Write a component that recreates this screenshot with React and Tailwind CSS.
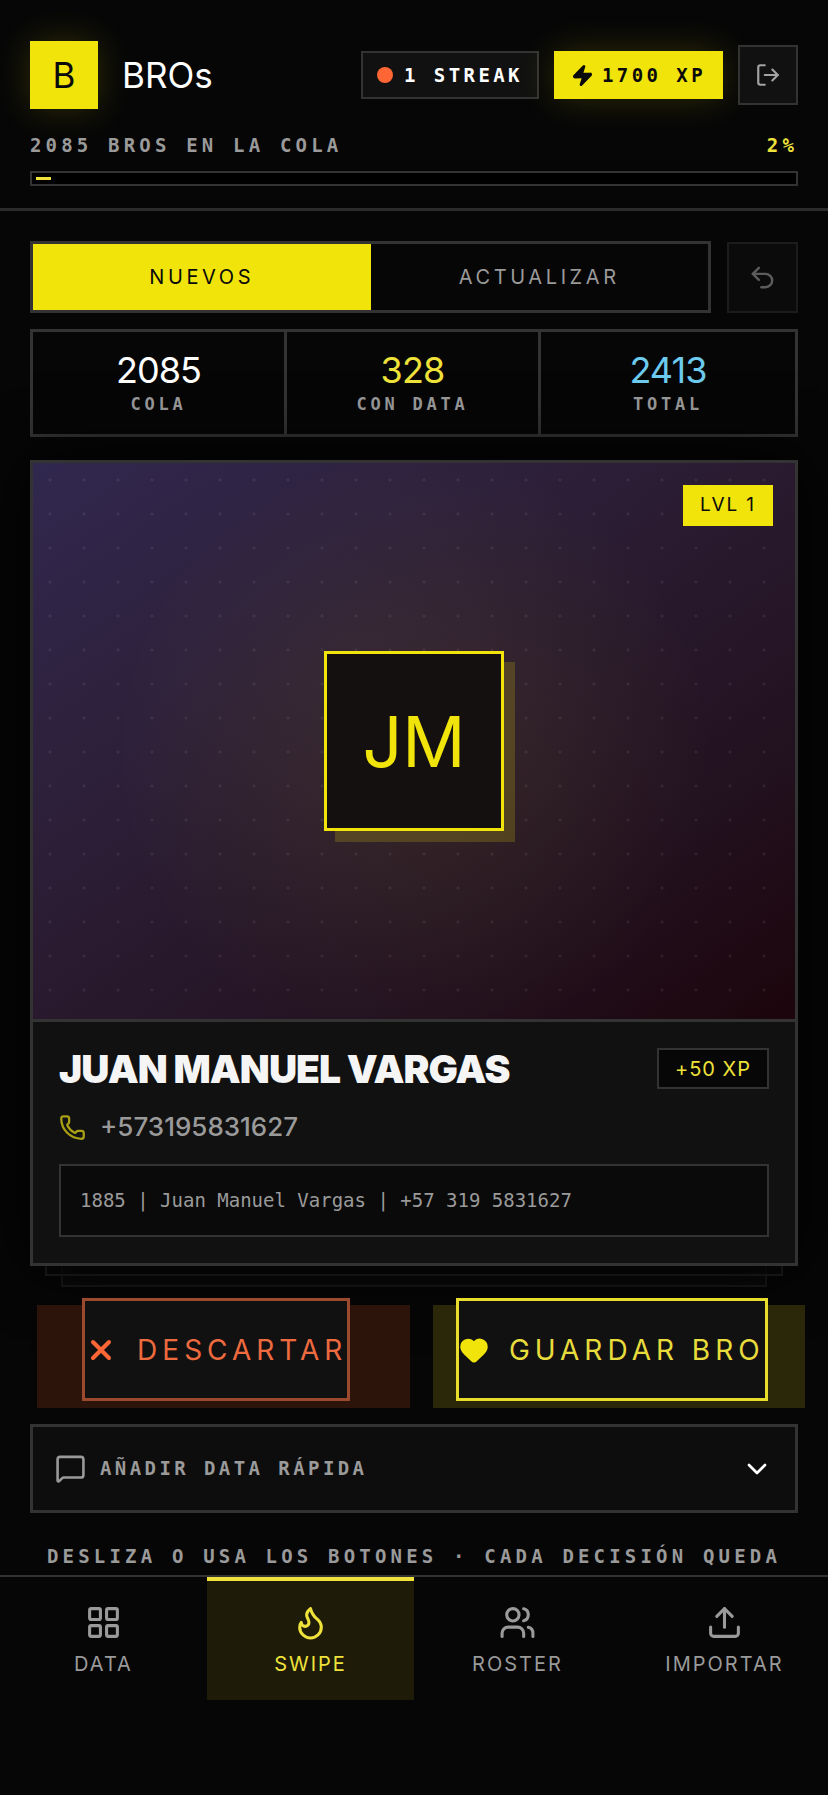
import React, { useState } from "react";
import {
  ChevronDown,
  Flame,
  Heart,
  LayoutGrid,
  LogOut,
  MessageSquare,
  Phone,
  Undo2,
  Upload,
  Users,
  X,
  Zap,
} from "lucide-react";

const stats = [
  { label: "COLA", value: 2085, color: "text-white" },
  { label: "CON DATA", value: 328, color: "text-[#efe23a]" },
  { label: "TOTAL", value: 2413, color: "text-[#6ccbee]" },
];

const navItems = [
  { label: "DATA", icon: LayoutGrid },
  { label: "SWIPE", icon: Flame },
  { label: "ROSTER", icon: Users },
  { label: "IMPORTAR", icon: Upload },
];

const tabs = ["NUEVOS", "ACTUALIZAR"];

const mono = "font-['DejaVu_Sans_Mono',monospace] font-bold";

function Header({ progress }) {
  return (
    <header className="px-[30px] pt-[41px] pb-[22px] border-b-[3px] border-[#2b2b2b]">
      <div className="flex items-center justify-between">
        <div className="flex items-center gap-6">
          <div className="w-[68px] h-[68px] flex items-center justify-center bg-[#f1e40b] text-[#0a0a0a] text-[35px] shadow-[0_0_36px_rgba(242,229,11,0.18)]">
            B
          </div>
          <h1 className="text-[35px] text-white">BROs</h1>
        </div>

        <div className="flex items-center gap-[15px]">
          <div className={`h-12 flex items-center gap-[11px] px-[14px] border-2 border-[#333] bg-[#111] text-white text-[19px] tracking-[0.18em] ${mono}`}>
            <span className="w-4 h-4 rounded-full bg-[#ff6635]" />
            <span>1 STREAK</span>
          </div>
          <div className={`h-12 flex items-center gap-2 px-[17px] bg-[#f1e40b] text-[#0a0a0a] text-[19px] tracking-[0.18em] shadow-[0_0_36px_rgba(242,229,11,0.18)] ${mono}`}>
            <Zap size={23} fill="currentColor" />
            <span>1700 XP</span>
          </div>
          <button
            type="button"
            aria-label="Salir"
            className="w-[60px] h-[60px] flex items-center justify-center border-2 border-[#333] bg-[#111] text-[#a3a3a3]"
          >
            <LogOut size={26} />
          </button>
        </div>
      </div>

      <div className={`mt-[21px] flex items-center justify-between text-[19px] leading-[30px] tracking-[0.22em] ${mono}`}>
        <span className="text-[#9a9a9a]">2085 BROS EN LA COLA</span>
        <span className="text-[#efe23a]">{progress}%</span>
      </div>

      <div className="mt-[11px] h-[15px] px-1 py-1 border-2 border-[#333] bg-black">
        <div className="h-[3px] bg-[#efe23a]" style={{ width: `${progress}%` }} />
      </div>
    </header>
  );
}

function ProfileCard() {
  return (
    <div className="relative mt-[23px]">
      {/* Cards waiting behind */}
      <div className="absolute inset-x-[31px] top-5 -bottom-[21px] border-2 border-[#191919] bg-[#0a0a0a]" />
      <div className="absolute inset-x-[15px] top-5 -bottom-[10px] border-2 border-[#1e1e1e] bg-[#0a0a0a]/60" />

      <article className="relative border-[3px] border-[#333] bg-[#111] shadow-[0_0_60px_#000]">
        <div className="relative h-[559px] flex items-center justify-center border-b-[3px] border-[#333] bg-[radial-gradient(circle_at_50%_52%,rgba(242,229,11,0.08),transparent_300px),linear-gradient(145deg,#31284f_0%,#2d1f38_35%,#22111f_75%,#1c050c_100%)]">
          <div className="absolute inset-0 bg-[radial-gradient(circle,rgba(255,255,255,0.07)_1px,transparent_2px)] bg-[length:34px_34px]" />
          <span className="absolute top-[22px] right-[22px] h-[41px] flex items-center px-[17px] bg-[#f1e40b] text-[#0a0a0a] text-[19px] tracking-widest">
            LVL 1
          </span>
          <div className="relative w-[180px] h-[180px] flex items-center justify-center border-[3px] border-[#f1e40b] bg-[#14100f] text-[#f1e40b] text-[70px] shadow-[11px_11px_0_rgba(242,229,11,0.18)]">
            JM
          </div>
        </div>

        <div className="px-[26px] pt-[26px] pb-[26px]">
          <div className="flex items-center justify-between">
            <h2 className="text-[39px] leading-[41px] font-black tracking-tight text-[#f5f5f5]">
              JUAN MANUEL VARGAS
            </h2>
            <span className="h-[41px] flex items-center px-4 border-2 border-[#333] bg-[#070707] text-[#efe23a] text-[20px] tracking-wider">
              +50 XP
            </span>
          </div>

          <div className="mt-5 flex items-center gap-[14px] text-[#9a9a9a] text-[26px] leading-[36px] font-medium">
            <Phone size={27} className="text-[#a8a015]" />
            <span>+573195831627</span>
          </div>

          <p className="mt-[19px] h-[73px] flex items-center px-[19px] border-2 border-[#333] bg-[#0a0a0a] text-[#9a9a9a] text-[19px] font-['DejaVu_Sans_Mono',monospace]">
            1885 | Juan Manuel Vargas | +57 319 5831627
          </p>
        </div>
      </article>
    </div>
  );
}

function Actions() {
  return (
    <div className="mt-8 grid grid-cols-2 gap-[23px]">
      <div className="relative flex justify-center">
        <div className="absolute inset-0 translate-[7px] bg-[#2c140b]" />
        <button
          type="button"
          className="relative h-[103px] flex items-center gap-5 border-[3px] border-[#9c4a2d] bg-[#111] text-[#ee6a3f] text-[28px] tracking-[5px] whitespace-nowrap"
        >
          <X size={32} strokeWidth={3} className="shrink-0 text-[#ff6635]" />
          DESCARTAR
        </button>
      </div>
      <div className="relative flex justify-center">
        <div className="absolute inset-0 translate-[7px] bg-[#2a2808]" />
        <button
          type="button"
          className="relative h-[103px] flex items-center gap-5 border-[3px] border-[#e8dc2c] bg-[#111] text-[#e8dc3c] text-[28px] tracking-[5px] whitespace-nowrap"
        >
          <Heart size={30} fill="currentColor" className="shrink-0 text-[#f1e40b]" />
          GUARDAR BRO
        </button>
      </div>
    </div>
  );
}

function BottomNav() {
  return (
    <nav className="border-t-2 border-[#333] bg-[#060606]">
      <div className="grid grid-cols-4">
        {navItems.map(({ label, icon: Icon }) => {
          const active = label === "SWIPE";
          return (
            <a
              key={label}
              href={`#${label.toLowerCase()}`}
              className={`h-[123px] flex flex-col items-center gap-2 pt-[23px] border-t-4 text-[20px] leading-[30px] tracking-[2px] ${
                active
                  ? "border-[#efe23a] bg-[#1e1c09] text-[#efe23a]"
                  : "border-transparent text-[#9a9a9a]"
              }`}
            >
              <Icon size={37} />
              {label}
            </a>
          );
        })}
      </div>
    </nav>
  );
}

export default function App() {
  const [tab, setTab] = useState("NUEVOS");
  const [open, setOpen] = useState(false);

  return (
    <div className="min-h-screen overflow-x-hidden bg-[#060607] font-['Inter',sans-serif]">
      <Header progress={2} />

      <main className="px-[30px] pt-[30px]">
        {/* Tabs */}
        <div className="flex items-center gap-4">
          <div className="flex-1 h-[72px] grid grid-cols-2 border-[3px] border-[#333]">
            {tabs.map((name) => (
              <button
                key={name}
                type="button"
                onClick={() => setTab(name)}
                className={`text-[20px] tracking-[0.18em] ${
                  tab === name ? "bg-[#f1e40b] text-[#0a0a0a]" : "text-[#9a9a9a]"
                }`}
              >
                {name}
              </button>
            ))}
          </div>
          <button
            type="button"
            aria-label="Deshacer"
            className="w-[71px] h-[71px] flex items-center justify-center border-2 border-[#1c1c1c] bg-[#0b0b0b] text-[#5c5c5c]"
          >
            <Undo2 size={29} />
          </button>
        </div>

        {/* Stats */}
        <dl className="mt-4 h-[108px] grid grid-cols-3 divide-x-3 divide-[#333] border-[3px] border-[#333]">
          {stats.map((stat) => (
            <div key={stat.label} className="flex flex-col-reverse justify-center items-center">
              <dt className={`text-[17px] leading-[26px] tracking-[0.22em] text-[#9a9a9a] ${mono}`}>
                {stat.label}
              </dt>
              <dd className={`text-[36px] leading-[42px] tracking-tight ${stat.color}`}>
                {stat.value}
              </dd>
            </div>
          ))}
        </dl>

        <ProfileCard />
        <Actions />

        {/* Quick data */}
        <button
          type="button"
          aria-expanded={open}
          onClick={() => setOpen(!open)}
          className={`mt-[23px] w-full h-[89px] flex items-center px-[22px] border-[3px] border-[#333] bg-[#0d0d0d] text-[#9a9a9a] text-[19px] tracking-[0.18em] ${mono}`}
        >
          <MessageSquare size={31} />
          <span className="ml-[14px]">AÑADIR DATA RÁPIDA</span>
          <ChevronDown size={32} className="ml-auto text-white" />
        </button>

        <p className={`mt-7 pb-1 text-center text-[19px] leading-[30px] tracking-[0.22em] whitespace-nowrap text-[#9a9a9a] ${mono}`}>
          DESLIZA O USA LOS BOTONES · CADA DECISIÓN QUEDA
        </p>
      </main>

      <BottomNav />
    </div>
  );
}
